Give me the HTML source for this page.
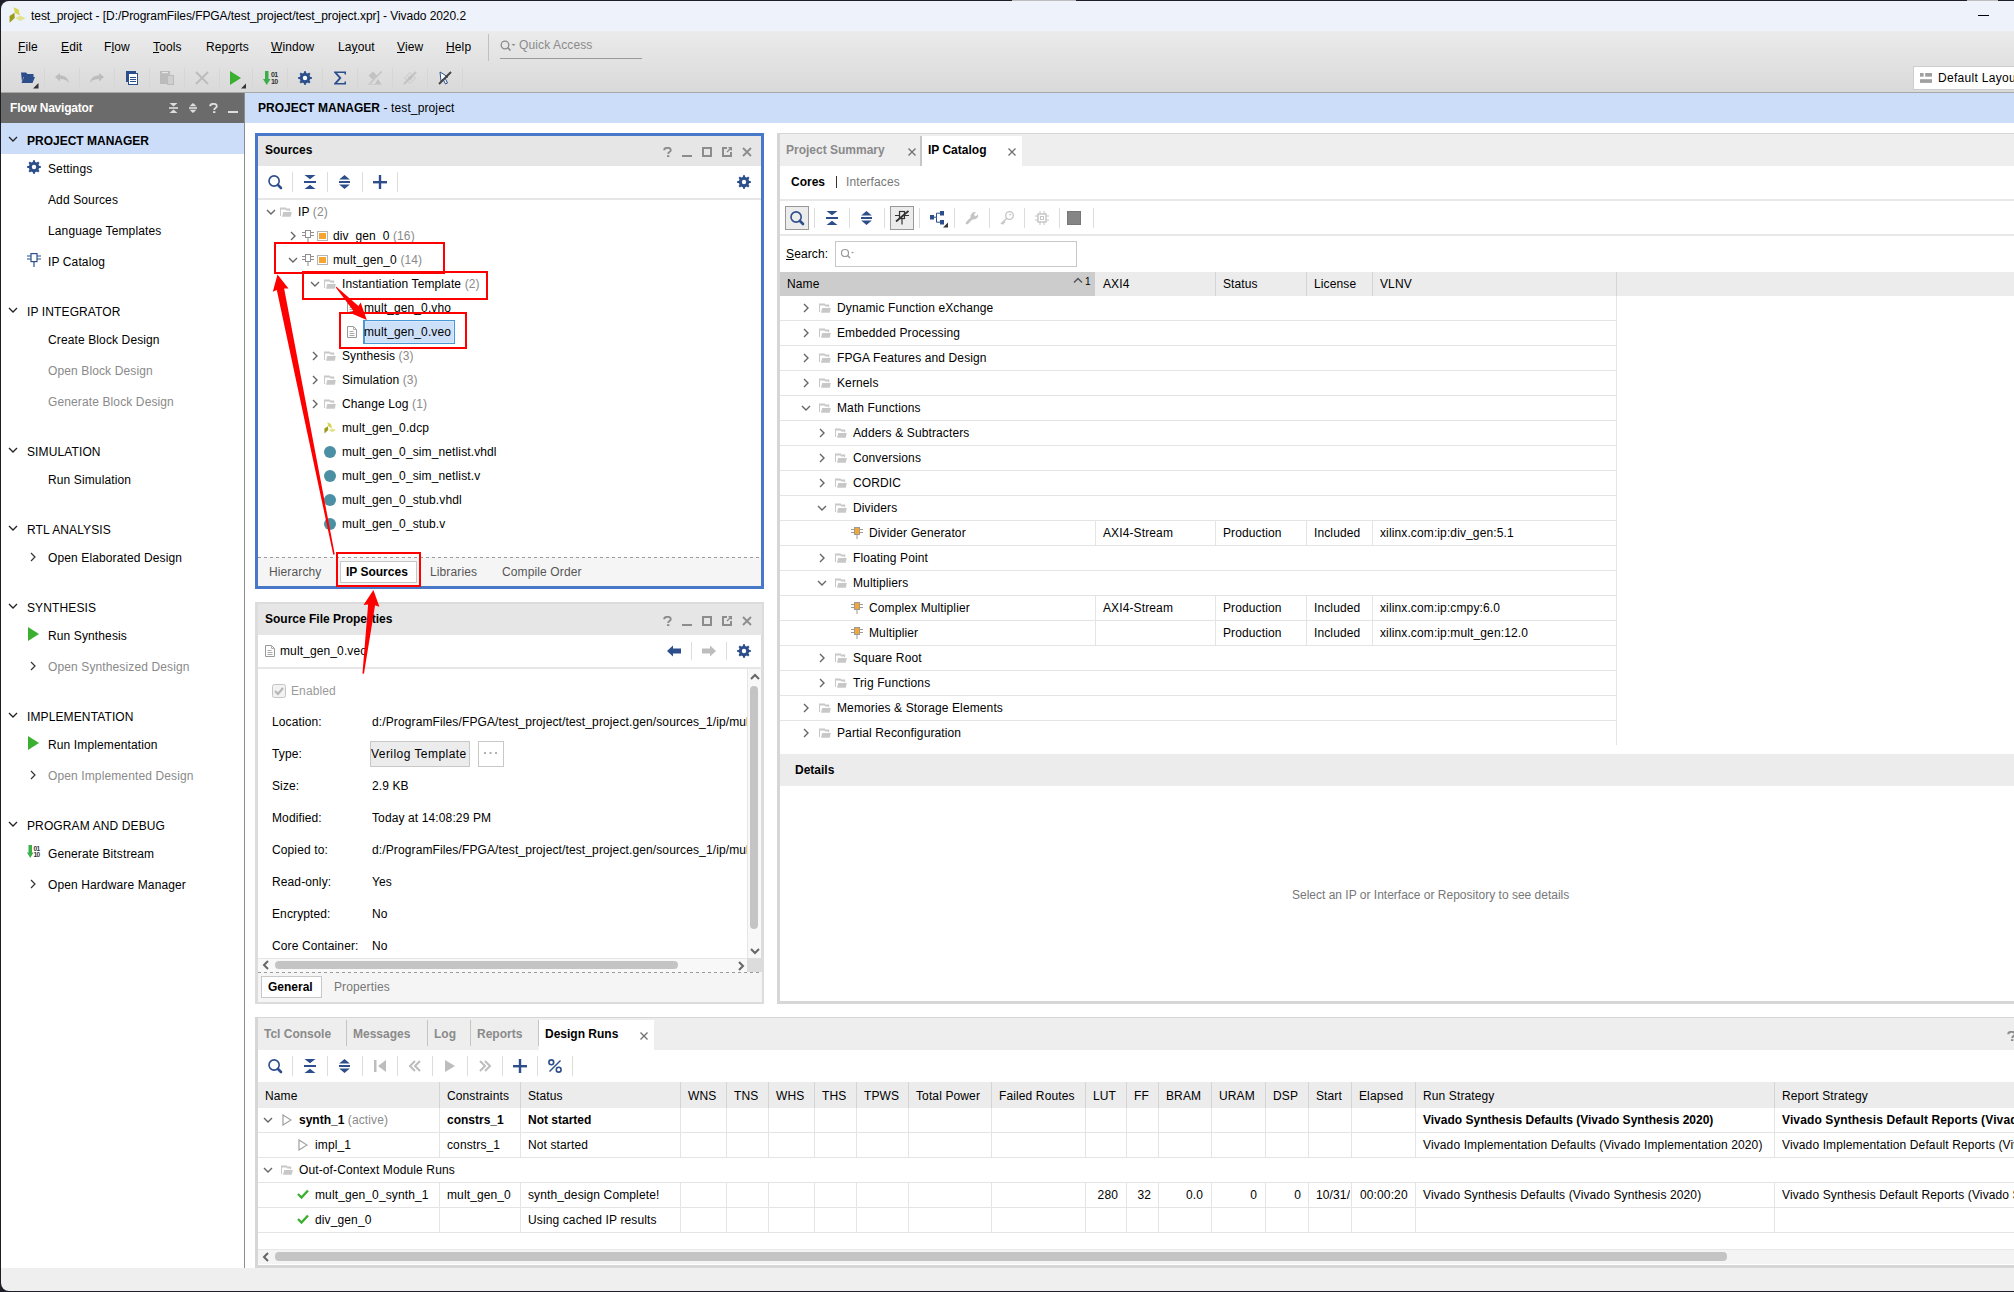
<!DOCTYPE html><html><head><meta charset="utf-8"><style>
html,body{margin:0;padding:0}
body{width:2014px;height:1292px;position:relative;overflow:hidden;background:#fff;font-family:"Liberation Sans",sans-serif;font-size:12px;color:#000}
.a{position:absolute}
.t{position:absolute;white-space:nowrap;line-height:14px;font-size:12px;font-family:"Liberation Sans",sans-serif;letter-spacing:0.12px}
b{letter-spacing:0}
.g{color:#8a8a8a}
.b{font-weight:700}
</style></head><body>
<div class="a" style="left:0px;top:0px;width:2014px;height:1292px;background:#1e1e28"></div>
<div class="a" style="left:1012px;top:0px;width:64px;height:1px;background:#bdbdbd"></div>
<div class="a" style="left:1967px;top:0px;width:31px;height:1px;background:#bdbdbd"></div>
<div class="a" style="left:1px;top:1px;width:2013px;height:30px;background:#eef2fa;border-top-left-radius:8px"></div>
<svg class="a" style="left:9px;top:7px" width="16.5" height="16.5" viewBox="0 0 16 16"><path d="M4.5 0.3 L9.3 2.5 L10.6 8.2 L5.8 5.9 Z" fill="#d5d64c"/><path d="M0.5 8.8 L5.3 5.6 L5.6 10.6 L0.6 15.3 Z" fill="#9b9b1c"/><path d="M6.2 10.5 L11.2 8.6 L16 10.8 L10.8 13.6 Z" fill="#e2e38c"/></svg>
<div class="t" style="left:31px;top:9px;letter-spacing:-0.06px">test_project - [D:/ProgramFiles/FPGA/test_project/test_project.xpr] - Vivado 2020.2</div>
<div class="a" style="left:1978px;top:15px;width:11px;height:1px;background:#000"></div>
<div class="a" style="left:1px;top:31px;width:2013px;height:61px;background:linear-gradient(#ebebeb,#d9d9d9)"></div>
<div class="a" style="left:1px;top:92px;width:2013px;height:1px;background:#a8a8a8"></div>
<div class="t" style="left:18px;top:40px;"><u>F</u>ile</div>
<div class="t" style="left:61px;top:40px;"><u>E</u>dit</div>
<div class="t" style="left:104px;top:40px;">F<u>l</u>ow</div>
<div class="t" style="left:153px;top:40px;"><u>T</u>ools</div>
<div class="t" style="left:206px;top:40px;">Rep<u>o</u>rts</div>
<div class="t" style="left:271px;top:40px;"><u>W</u>indow</div>
<div class="t" style="left:338px;top:40px;">La<u>y</u>out</div>
<div class="t" style="left:397px;top:40px;"><u>V</u>iew</div>
<div class="t" style="left:446px;top:40px;"><u>H</u>elp</div>
<div class="a" style="left:488px;top:34px;width:1px;height:27px;background:#c0c0c0"></div>
<svg class="a" style="left:500px;top:40px" width="16" height="12" viewBox="0 0 16 12"><circle cx="5" cy="5" r="3.8" fill="none" stroke="#8a8a8a" stroke-width="1.3"/><path d="M7.8 7.8 L10.5 10.5" stroke="#8a8a8a" stroke-width="1.6"/><path d="M11.5 4 h4 l-2 2 z" fill="#8a8a8a"/></svg>
<div class="t" style="left:519px;top:38px;color:#8a8a8a">Quick Access</div>
<div class="a" style="left:500px;top:58px;width:142px;height:1px;background:#9a9a9a"></div>
<div class="a" style="left:44px;top:68px;width:1px;height:20px;background:#d6d6d6"></div>
<div class="a" style="left:79px;top:68px;width:1px;height:20px;background:#d6d6d6"></div>
<div class="a" style="left:114px;top:68px;width:1px;height:20px;background:#d6d6d6"></div>
<div class="a" style="left:149px;top:68px;width:1px;height:20px;background:#d6d6d6"></div>
<div class="a" style="left:184px;top:68px;width:1px;height:20px;background:#d6d6d6"></div>
<div class="a" style="left:219px;top:68px;width:1px;height:20px;background:#d6d6d6"></div>
<div class="a" style="left:252px;top:68px;width:1px;height:20px;background:#d6d6d6"></div>
<div class="a" style="left:287px;top:68px;width:1px;height:20px;background:#d6d6d6"></div>
<div class="a" style="left:322px;top:68px;width:1px;height:20px;background:#d6d6d6"></div>
<div class="a" style="left:357px;top:68px;width:1px;height:20px;background:#d6d6d6"></div>
<div class="a" style="left:392px;top:68px;width:1px;height:20px;background:#d6d6d6"></div>
<div class="a" style="left:427px;top:68px;width:1px;height:20px;background:#d6d6d6"></div>
<div class="a" style="left:462px;top:68px;width:1px;height:20px;background:#d6d6d6"></div>
<svg class="a" style="left:21px;top:71px" width="18" height="18" viewBox="0 0 18 18"><path d="M0 1.5 h5 l1.5 1.5 h6 v3 h-10 l-1.5 5 z" fill="#2c4f8c"/><path d="M3 6 h11 l-2.5 6 h-11 z" fill="#2c4f8c"/><path d="M12 17.5 L17.5 17.5 L17.5 12 Z" fill="#333"/></svg>
<svg class="a" style="left:55px;top:73px" width="14" height="10" viewBox="0 0 14 10"><path d="M0 4 L5 0 V2.5 C10 2.5 13.5 5 14 10 C12 7 9 6 5 6 V8.5 Z" fill="#bdbdbd"/></svg>
<svg class="a" style="left:90px;top:73px" width="14" height="10" viewBox="0 0 14 10"><path d="M14 4 L9 0 V2.5 C4 2.5 0.5 5 0 10 C2 7 5 6 9 6 V8.5 Z" fill="#bdbdbd"/></svg>
<svg class="a" style="left:126px;top:71px" width="12" height="14" viewBox="0 0 12 14"><rect x="0" y="0" width="10" height="11" fill="#2c4f8c"/><rect x="2.5" y="2.5" width="9" height="11" fill="#fff" stroke="#2c4f8c" stroke-width="1"/><path d="M4 6.5h6M4 8.5h6M4 10.5h6" stroke="#2c4f8c" stroke-width="1"/></svg>
<svg class="a" style="left:160px;top:71px" width="14" height="14" viewBox="0 0 14 14"><rect x="0" y="0" width="10" height="13" fill="#bbb"/><rect x="2" y="1" width="6" height="1.2" fill="#e5e5e5"/><rect x="7.5" y="4.5" width="6" height="9" fill="#cfcfcf" stroke="#bbb"/></svg>
<svg class="a" style="left:195px;top:71px" width="14" height="14" viewBox="0 0 14 14"><path d="M1 1 L13 13 M13 1 L1 13" stroke="#bdbdbd" stroke-width="2"/></svg>
<svg class="a" style="left:229px;top:71px" width="18" height="18" viewBox="0 0 18 18"><path d="M1 0 L12 7 L1 14 Z" fill="#3bb030"/><path d="M12 17.5 L17 17.5 L17 12.5 Z" fill="#333"/></svg>
<svg class="a" style="left:263px;top:71px" width="16" height="14" viewBox="0 0 16 14"><rect x="2" y="0" width="3.5" height="9" fill="#3bb04a"/><path d="M0 8 h7.5 l-3.75 6 z" fill="#3bb04a"/><text x="8" y="6" font-size="7" font-weight="700" font-family="Liberation Sans" fill="#333" letter-spacing="-0.6">01</text><text x="8" y="12.8" font-size="7" font-weight="700" font-family="Liberation Sans" fill="#333" letter-spacing="-0.6">10</text></svg>
<svg class="a" style="left:298px;top:71px" width="14" height="14" viewBox="0 0 14 14"><path d="M6.0 0.2 H8.0 L8.6 7.0 H5.4 Z" fill="#2c4f8c" transform="rotate(0 7.0 7.0)"/><path d="M6.0 0.2 H8.0 L8.6 7.0 H5.4 Z" fill="#2c4f8c" transform="rotate(45 7.0 7.0)"/><path d="M6.0 0.2 H8.0 L8.6 7.0 H5.4 Z" fill="#2c4f8c" transform="rotate(90 7.0 7.0)"/><path d="M6.0 0.2 H8.0 L8.6 7.0 H5.4 Z" fill="#2c4f8c" transform="rotate(135 7.0 7.0)"/><path d="M6.0 0.2 H8.0 L8.6 7.0 H5.4 Z" fill="#2c4f8c" transform="rotate(180 7.0 7.0)"/><path d="M6.0 0.2 H8.0 L8.6 7.0 H5.4 Z" fill="#2c4f8c" transform="rotate(225 7.0 7.0)"/><path d="M6.0 0.2 H8.0 L8.6 7.0 H5.4 Z" fill="#2c4f8c" transform="rotate(270 7.0 7.0)"/><path d="M6.0 0.2 H8.0 L8.6 7.0 H5.4 Z" fill="#2c4f8c" transform="rotate(315 7.0 7.0)"/><circle cx="7.0" cy="7.0" r="5.18" fill="#2c4f8c"/><circle cx="7.0" cy="7.0" r="2.17" fill="#fff"/></svg>
<svg class="a" style="left:333px;top:71px" width="14" height="14" viewBox="0 0 14 14"><path d="M1 0.5 H13 V3.5 H11.5 V2 H4 L8.5 7 L4 12 H11.5 V10.5 H13 V13.5 H1 V12.5 L6 7 L1 1.5 Z" fill="#2c4f8c"/></svg>
<svg class="a" style="left:368px;top:71px" width="14" height="14" viewBox="0 0 14 14"><path d="M0.5 4.5 L5 0.5 L9.5 5 L5 9 Z" fill="#c2c2c2"/><path d="M13.5 0.5 L1 13.5" stroke="#c6c6c6" stroke-width="1.6"/><path d="M6.5 13.5 h7 l-3.5 -5.5 z" fill="#c2c2c2"/><path d="M0 13.5 h14" stroke="#cdcdcd"/></svg>
<svg class="a" style="left:403px;top:71px" width="14" height="14" viewBox="0 0 14 14"><path d="M7 1.5 L12.5 7 L7 12.5 L1.5 7 Z" fill="none" stroke="#c9c9c9"/><path d="M13 1 L1 13" stroke="#c2c2c2" stroke-width="2"/><ellipse cx="7" cy="7" rx="1.8" ry="3" transform="rotate(45 7 7)" fill="#c2c2c2"/></svg>
<svg class="a" style="left:438px;top:71px" width="14" height="14" viewBox="0 0 14 14"><path d="M2 1 L10 6 L7 7 L9.5 12 L7.5 13 L5 8 L3 10 Z" fill="#fff" stroke="#2c4f8c" stroke-width="1"/><path d="M13 1 L1 13" stroke="#444" stroke-width="2"/></svg>
<div class="a" style="left:1913px;top:66px;width:110px;height:24px;background:#fff;border:1px solid #cdcdcd;box-sizing:border-box"></div>
<svg class="a" style="left:1920px;top:73px" width="12" height="10" viewBox="0 0 12 10"><rect x="0" y="0" width="3.6" height="3.7" fill="#a0a0a0"/><rect x="5.2" y="0" width="6.8" height="3.7" fill="#a0a0a0"/><rect x="0" y="6.2" width="12" height="3.7" fill="#a0a0a0"/></svg>
<div class="t" style="left:1938px;top:71px;letter-spacing:0.3px">Default Layout</div>
<div class="a" style="left:1px;top:93px;width:243px;height:1176px;background:#fff"></div>
<div class="a" style="left:1px;top:93px;width:243px;height:30px;background:#6b6b6b"></div>
<div class="t" style="left:10px;top:101px;color:#fff;font-weight:700;letter-spacing:-0.2px">Flow Navigator</div>
<svg class="a" style="left:169px;top:103px" width="9" height="10" viewBox="0 0 9 10"><path d="M0.5 0 h8 l-4 3.5 z M0.5 10 h8 l-4 -3.5 z" fill="#dedede"/><rect x="0" y="4.2" width="9" height="1.6" fill="#dedede"/></svg>
<svg class="a" style="left:189px;top:103px" width="8" height="10" viewBox="0 0 8 10"><path d="M0.5 3.2 h7 l-3.5 -3.2 z M0.5 6.8 h7 l-3.5 3.2 z" fill="#dedede"/><rect x="0" y="4.2" width="8" height="1.6" fill="#dedede"/></svg>
<svg class="a" style="left:208.5px;top:103px" width="9" height="10" viewBox="0 0 9 10"><path d="M1.2 3.3 C1.2 1.4 2.6 0.8 4.5 0.8 C6.5 0.8 7.8 1.8 7.8 3.2 C7.8 5 5.2 5.2 5.2 6.9" fill="none" stroke="#dedede" stroke-width="1.9"/><rect x="4" y="8.2" width="2.4" height="1.8" fill="#dedede"/></svg>
<div class="a" style="left:228px;top:111px;width:10px;height:2px;background:#dedede"></div>
<div class="a" style="left:244px;top:93px;width:1px;height:1176px;background:#8c8c8c"></div>
<div class="a" style="left:1px;top:123px;width:243px;height:31px;background:#cbddf9"></div>
<svg class="a" style="left:7.5px;top:136px" width="10" height="6" viewBox="0 0 10 6"><path d="M1 1 L5 5 L9 1" fill="none" stroke="#222" stroke-width="1.3"/></svg>
<div class="t" style="left:27px;top:134px;font-weight:700;letter-spacing:0">PROJECT MANAGER</div>
<svg class="a" style="left:27px;top:160px" width="14" height="14" viewBox="0 0 14 14"><path d="M6.0 0.2 H8.0 L8.6 7.0 H5.4 Z" fill="#2c4f8c" transform="rotate(0 7.0 7.0)"/><path d="M6.0 0.2 H8.0 L8.6 7.0 H5.4 Z" fill="#2c4f8c" transform="rotate(45 7.0 7.0)"/><path d="M6.0 0.2 H8.0 L8.6 7.0 H5.4 Z" fill="#2c4f8c" transform="rotate(90 7.0 7.0)"/><path d="M6.0 0.2 H8.0 L8.6 7.0 H5.4 Z" fill="#2c4f8c" transform="rotate(135 7.0 7.0)"/><path d="M6.0 0.2 H8.0 L8.6 7.0 H5.4 Z" fill="#2c4f8c" transform="rotate(180 7.0 7.0)"/><path d="M6.0 0.2 H8.0 L8.6 7.0 H5.4 Z" fill="#2c4f8c" transform="rotate(225 7.0 7.0)"/><path d="M6.0 0.2 H8.0 L8.6 7.0 H5.4 Z" fill="#2c4f8c" transform="rotate(270 7.0 7.0)"/><path d="M6.0 0.2 H8.0 L8.6 7.0 H5.4 Z" fill="#2c4f8c" transform="rotate(315 7.0 7.0)"/><circle cx="7.0" cy="7.0" r="5.18" fill="#2c4f8c"/><circle cx="7.0" cy="7.0" r="2.17" fill="#fff"/></svg>
<div class="t" style="left:48px;top:162px;">Settings</div>
<div class="t" style="left:48px;top:193px;">Add Sources</div>
<div class="t" style="left:48px;top:224px;">Language Templates</div>
<svg class="a" style="left:27px;top:253px" width="14" height="14" viewBox="0 0 14 14"><rect x="4" y="0.6" width="6" height="8" fill="none" stroke="#2c4f8c" stroke-width="1.2"/><path d="M0 3h4M0 6h4M10 3h4M10 6h4M7 8.6v5.4" stroke="#2c4f8c" stroke-width="1.2"/></svg>
<div class="t" style="left:48px;top:255px;">IP Catalog</div>
<svg class="a" style="left:7.5px;top:307px" width="10" height="6" viewBox="0 0 10 6"><path d="M1 1 L5 5 L9 1" fill="none" stroke="#222" stroke-width="1.3"/></svg>
<div class="t" style="left:27px;top:305px;">IP INTEGRATOR</div>
<div class="t" style="left:48px;top:333px;">Create Block Design</div>
<div class="t" style="left:48px;top:364px;color:#8a8a8a">Open Block Design</div>
<div class="t" style="left:48px;top:395px;color:#8a8a8a">Generate Block Design</div>
<svg class="a" style="left:7.5px;top:447px" width="10" height="6" viewBox="0 0 10 6"><path d="M1 1 L5 5 L9 1" fill="none" stroke="#222" stroke-width="1.3"/></svg>
<div class="t" style="left:27px;top:445px;">SIMULATION</div>
<div class="t" style="left:48px;top:473px;">Run Simulation</div>
<svg class="a" style="left:7.5px;top:525px" width="10" height="6" viewBox="0 0 10 6"><path d="M1 1 L5 5 L9 1" fill="none" stroke="#222" stroke-width="1.3"/></svg>
<div class="t" style="left:27px;top:523px;">RTL ANALYSIS</div>
<svg class="a" style="left:30px;top:552px" width="6" height="10" viewBox="0 0 6 10"><path d="M1 1 L5 5 L1 9" fill="none" stroke="#333" stroke-width="1.2"/></svg>
<div class="t" style="left:48px;top:551px;">Open Elaborated Design</div>
<svg class="a" style="left:7.5px;top:603px" width="10" height="6" viewBox="0 0 10 6"><path d="M1 1 L5 5 L9 1" fill="none" stroke="#222" stroke-width="1.3"/></svg>
<div class="t" style="left:27px;top:601px;">SYNTHESIS</div>
<svg class="a" style="left:28px;top:627px" width="12" height="14" viewBox="0 0 12 14"><path d="M0 0 L11 7 L0 14 Z" fill="#3bb030"/></svg>
<div class="t" style="left:48px;top:629px;">Run Synthesis</div>
<svg class="a" style="left:30px;top:661px" width="6" height="10" viewBox="0 0 6 10"><path d="M1 1 L5 5 L1 9" fill="none" stroke="#333" stroke-width="1.2"/></svg>
<div class="t" style="left:48px;top:660px;color:#8a8a8a">Open Synthesized Design</div>
<svg class="a" style="left:7.5px;top:712px" width="10" height="6" viewBox="0 0 10 6"><path d="M1 1 L5 5 L9 1" fill="none" stroke="#222" stroke-width="1.3"/></svg>
<div class="t" style="left:27px;top:710px;">IMPLEMENTATION</div>
<svg class="a" style="left:28px;top:736px" width="12" height="14" viewBox="0 0 12 14"><path d="M0 0 L11 7 L0 14 Z" fill="#3bb030"/></svg>
<div class="t" style="left:48px;top:738px;">Run Implementation</div>
<svg class="a" style="left:30px;top:770px" width="6" height="10" viewBox="0 0 6 10"><path d="M1 1 L5 5 L1 9" fill="none" stroke="#333" stroke-width="1.2"/></svg>
<div class="t" style="left:48px;top:769px;color:#8a8a8a">Open Implemented Design</div>
<svg class="a" style="left:7.5px;top:821px" width="10" height="6" viewBox="0 0 10 6"><path d="M1 1 L5 5 L9 1" fill="none" stroke="#222" stroke-width="1.3"/></svg>
<div class="t" style="left:27px;top:819px;">PROGRAM AND DEBUG</div>
<svg class="a" style="left:27px;top:845px" width="15" height="14" viewBox="0 0 15 14"><rect x="1.5" y="0" width="3.5" height="8" fill="#3bb04a"/><path d="M0 7.5 h6.5 l-3.25 5.5 z" fill="#3bb04a"/><text x="6.6" y="5.6" font-size="6.5" font-weight="700" font-family="Liberation Sans" fill="#333" letter-spacing="-0.6">01</text><text x="6.6" y="11.6" font-size="6.5" font-weight="700" font-family="Liberation Sans" fill="#333" letter-spacing="-0.6">10</text></svg>
<div class="t" style="left:48px;top:847px;">Generate Bitstream</div>
<svg class="a" style="left:30px;top:879px" width="6" height="10" viewBox="0 0 6 10"><path d="M1 1 L5 5 L1 9" fill="none" stroke="#333" stroke-width="1.2"/></svg>
<div class="t" style="left:48px;top:878px;">Open Hardware Manager</div>
<div class="a" style="left:245px;top:93px;width:1769px;height:1175px;background:#fff"></div>
<div class="a" style="left:245px;top:93px;width:1769px;height:30px;background:#cbddf9"></div>
<div class="t" style="left:258px;top:101px;"><b>PROJECT MANAGER</b> - test_project</div>
<div class="a" style="left:255px;top:133px;width:509px;height:456px;background:#fff;border:3px solid #4a78c8;box-sizing:border-box"></div>
<div class="a" style="left:258px;top:136px;width:503px;height:30px;background:#e6e6e6"></div>
<div class="t" style="left:265px;top:143px;font-weight:700;letter-spacing:0">Sources</div>
<svg class="a" style="left:663px;top:147px" width="9" height="10" viewBox="0 0 9 10"><path d="M1.2 3.3 C1.2 1.4 2.6 0.8 4.5 0.8 C6.5 0.8 7.8 1.8 7.8 3.2 C7.8 5 5.2 5.2 5.2 6.9" fill="none" stroke="#8c8c8c" stroke-width="1.9"/><rect x="4" y="8.2" width="2.4" height="1.8" fill="#8c8c8c"/></svg>
<div class="a" style="left:682px;top:155px;width:10px;height:2px;background:#8c8c8c"></div>
<svg class="a" style="left:702px;top:147px" width="10" height="10" viewBox="0 0 10 10"><rect x="1" y="1" width="8" height="8" fill="none" stroke="#8c8c8c" stroke-width="2"/></svg>
<svg class="a" style="left:722px;top:147px" width="10" height="10" viewBox="0 0 10 10"><path d="M5 1 H1 V9 H9 V5" fill="none" stroke="#8c8c8c" stroke-width="2"/><path d="M5 5 L9.5 0.5 M6.5 0.5 H9.5 V3.5" fill="none" stroke="#8c8c8c" stroke-width="1.4"/></svg>
<svg class="a" style="left:742px;top:147px" width="10" height="10" viewBox="0 0 10 10"><path d="M1 1 L9 9 M9 1 L1 9" stroke="#8c8c8c" stroke-width="1.8"/></svg>
<svg class="a" style="left:268px;top:175px" width="15" height="15" viewBox="0 0 15 15"><circle cx="6.1" cy="6" r="5.1" fill="none" stroke="#2d4e8b" stroke-width="1.6"/><path d="M10 10 L13 13" stroke="#2d4e8b" stroke-width="2.6" stroke-linecap="round"/></svg>
<svg class="a" style="left:303px;top:175px" width="14" height="15" viewBox="0 0 14 15"><path d="M1.5 0 h11 l-5.5 4.3 z M1.5 14 h11 l-5.5 -4.3 z" fill="#2d4e8b"/><rect x="1" y="6" width="12" height="2" fill="#2d4e8b"/></svg>
<svg class="a" style="left:338px;top:175px" width="14" height="15" viewBox="0 0 14 15"><path d="M1.2 4.6 h10.6 l-5.3 -4.6 z M1.2 9.4 h10.6 l-5.3 4.6 z" fill="#2d4e8b"/><rect x="1" y="6" width="11" height="2" fill="#2d4e8b"/></svg>
<svg class="a" style="left:373px;top:175px" width="14" height="14" viewBox="0 0 14 14"><rect x="0" y="6" width="14" height="2.4" fill="#2d4e8b"/><rect x="5.8" y="0" width="2.4" height="14" fill="#2d4e8b"/></svg>
<div class="a" style="left:292px;top:172px;width:1px;height:20px;background:#dcdcdc"></div>
<div class="a" style="left:327px;top:172px;width:1px;height:20px;background:#dcdcdc"></div>
<div class="a" style="left:362px;top:172px;width:1px;height:20px;background:#dcdcdc"></div>
<div class="a" style="left:397px;top:172px;width:1px;height:20px;background:#dcdcdc"></div>
<svg class="a" style="left:737px;top:175px" width="14" height="14" viewBox="0 0 14 14"><path d="M6.0 0.2 H8.0 L8.6 7.0 H5.4 Z" fill="#2c4f8c" transform="rotate(0 7.0 7.0)"/><path d="M6.0 0.2 H8.0 L8.6 7.0 H5.4 Z" fill="#2c4f8c" transform="rotate(45 7.0 7.0)"/><path d="M6.0 0.2 H8.0 L8.6 7.0 H5.4 Z" fill="#2c4f8c" transform="rotate(90 7.0 7.0)"/><path d="M6.0 0.2 H8.0 L8.6 7.0 H5.4 Z" fill="#2c4f8c" transform="rotate(135 7.0 7.0)"/><path d="M6.0 0.2 H8.0 L8.6 7.0 H5.4 Z" fill="#2c4f8c" transform="rotate(180 7.0 7.0)"/><path d="M6.0 0.2 H8.0 L8.6 7.0 H5.4 Z" fill="#2c4f8c" transform="rotate(225 7.0 7.0)"/><path d="M6.0 0.2 H8.0 L8.6 7.0 H5.4 Z" fill="#2c4f8c" transform="rotate(270 7.0 7.0)"/><path d="M6.0 0.2 H8.0 L8.6 7.0 H5.4 Z" fill="#2c4f8c" transform="rotate(315 7.0 7.0)"/><circle cx="7.0" cy="7.0" r="5.18" fill="#2c4f8c"/><circle cx="7.0" cy="7.0" r="2.17" fill="#fff"/></svg>
<div class="a" style="left:258px;top:198px;width:503px;height:2px;background:#e6e6e6"></div>
<svg class="a" style="left:266px;top:209px" width="10" height="6" viewBox="0 0 10 6"><path d="M1 1 L5 5 L9 1" fill="none" stroke="#666" stroke-width="1.4"/></svg>
<svg class="a" style="left:280px;top:207px" width="12" height="10" viewBox="0 0 12 10"><path d="M0 0.4 H5.8 L6.4 1.5 H10.2 V4.2 H9.2 V3.5 H6 L5.5 2.5 H1 V9 H0 Z" fill="#c8c8c8"/><path d="M3.2 5 H11.8 L10.8 9.7 H2 Z" fill="#c8c8c8"/></svg>
<div class="t" style="left:298px;top:205px;">IP <span class="g">(2)</span></div>
<svg class="a" style="left:290px;top:231px" width="6" height="10" viewBox="0 0 6 10"><path d="M1 1 L5 5 L1 9" fill="none" stroke="#666" stroke-width="1.4"/></svg>
<svg class="a" style="left:302px;top:230px" width="12" height="12" viewBox="0 0 12 12"><rect x="3.5" y="0.5" width="5" height="7" fill="none" stroke="#8f8f8f"/><path d="M0 2.5h3.5M0 5.5h3.5M8.5 2.5h3.5M8.5 5.5h3.5M6 7.5v4.5" stroke="#8f8f8f"/></svg>
<svg class="a" style="left:317px;top:231px" width="11" height="10" viewBox="0 0 11 10"><rect x="0.5" y="0.5" width="10" height="9" fill="#fff" stroke="#b5b5b5"/><rect x="2" y="2" width="7" height="6" fill="#f7a531"/></svg>
<div class="t" style="left:333px;top:229px;">div_gen_0 <span class="g">(16)</span></div>
<svg class="a" style="left:288px;top:257px" width="10" height="6" viewBox="0 0 10 6"><path d="M1 1 L5 5 L9 1" fill="none" stroke="#666" stroke-width="1.4"/></svg>
<svg class="a" style="left:302px;top:254px" width="12" height="12" viewBox="0 0 12 12"><rect x="3.5" y="0.5" width="5" height="7" fill="none" stroke="#8f8f8f"/><path d="M0 2.5h3.5M0 5.5h3.5M8.5 2.5h3.5M8.5 5.5h3.5M6 7.5v4.5" stroke="#8f8f8f"/></svg>
<svg class="a" style="left:317px;top:255px" width="11" height="10" viewBox="0 0 11 10"><rect x="0.5" y="0.5" width="10" height="9" fill="#fff" stroke="#b5b5b5"/><rect x="2" y="2" width="7" height="6" fill="#f7a531"/></svg>
<div class="t" style="left:333px;top:253px;">mult_gen_0 <span class="g">(14)</span></div>
<svg class="a" style="left:310px;top:281px" width="10" height="6" viewBox="0 0 10 6"><path d="M1 1 L5 5 L9 1" fill="none" stroke="#666" stroke-width="1.4"/></svg>
<svg class="a" style="left:324px;top:279px" width="12" height="10" viewBox="0 0 12 10"><path d="M0 0.4 H5.8 L6.4 1.5 H10.2 V4.2 H9.2 V3.5 H6 L5.5 2.5 H1 V9 H0 Z" fill="#c8c8c8"/><path d="M3.2 5 H11.8 L10.8 9.7 H2 Z" fill="#c8c8c8"/></svg>
<div class="t" style="left:342px;top:277px;">Instantiation Template <span class="g">(2)</span></div>
<svg class="a" style="left:347px;top:302px" width="10" height="12" viewBox="0 0 10 12"><path d="M0.5 0.5 h6 l3 3 v8 h-9 z" fill="#fff" stroke="#9a9a9a"/><path d="M6.5 0.5 v3 h3" fill="none" stroke="#b0b0b0"/><path d="M2.5 5.5h4M2.5 7.5h5M2.5 9.5h5" stroke="#a8a8a8"/></svg>
<div class="t" style="left:364px;top:301px;">mult_gen_0.vho</div>
<div class="a" style="left:363px;top:320px;width:92px;height:24px;background:#cde0fa;border:1px solid #4898d8;border-left-width:2px;box-shadow:inset 0 0 0 1px #dbe8fb;box-sizing:border-box"></div>
<svg class="a" style="left:347px;top:326px" width="10" height="12" viewBox="0 0 10 12"><path d="M0.5 0.5 h6 l3 3 v8 h-9 z" fill="#fff" stroke="#9a9a9a"/><path d="M6.5 0.5 v3 h3" fill="none" stroke="#b0b0b0"/><path d="M2.5 5.5h4M2.5 7.5h5M2.5 9.5h5" stroke="#a8a8a8"/></svg>
<div class="t" style="left:364px;top:325px;">mult_gen_0.veo</div>
<svg class="a" style="left:312px;top:351px" width="6" height="10" viewBox="0 0 6 10"><path d="M1 1 L5 5 L1 9" fill="none" stroke="#666" stroke-width="1.4"/></svg>
<svg class="a" style="left:324px;top:351px" width="12" height="10" viewBox="0 0 12 10"><path d="M0 0.4 H5.8 L6.4 1.5 H10.2 V4.2 H9.2 V3.5 H6 L5.5 2.5 H1 V9 H0 Z" fill="#c8c8c8"/><path d="M3.2 5 H11.8 L10.8 9.7 H2 Z" fill="#c8c8c8"/></svg>
<div class="t" style="left:342px;top:349px;">Synthesis <span class="g">(3)</span></div>
<svg class="a" style="left:312px;top:375px" width="6" height="10" viewBox="0 0 6 10"><path d="M1 1 L5 5 L1 9" fill="none" stroke="#666" stroke-width="1.4"/></svg>
<svg class="a" style="left:324px;top:375px" width="12" height="10" viewBox="0 0 12 10"><path d="M0 0.4 H5.8 L6.4 1.5 H10.2 V4.2 H9.2 V3.5 H6 L5.5 2.5 H1 V9 H0 Z" fill="#c8c8c8"/><path d="M3.2 5 H11.8 L10.8 9.7 H2 Z" fill="#c8c8c8"/></svg>
<div class="t" style="left:342px;top:373px;">Simulation <span class="g">(3)</span></div>
<svg class="a" style="left:312px;top:399px" width="6" height="10" viewBox="0 0 6 10"><path d="M1 1 L5 5 L1 9" fill="none" stroke="#666" stroke-width="1.4"/></svg>
<svg class="a" style="left:324px;top:399px" width="12" height="10" viewBox="0 0 12 10"><path d="M0 0.4 H5.8 L6.4 1.5 H10.2 V4.2 H9.2 V3.5 H6 L5.5 2.5 H1 V9 H0 Z" fill="#c8c8c8"/><path d="M3.2 5 H11.8 L10.8 9.7 H2 Z" fill="#c8c8c8"/></svg>
<div class="t" style="left:342px;top:397px;">Change Log <span class="g">(1)</span></div>
<svg class="a" style="left:324px;top:422px" width="12" height="12" viewBox="0 0 16 16"><path d="M4.5 0.3 L9.3 2.5 L10.6 8.2 L5.8 5.9 Z" fill="#d5d64c"/><path d="M0.5 8.8 L5.3 5.6 L5.6 10.6 L0.6 15.3 Z" fill="#9b9b1c"/><path d="M6.2 10.5 L11.2 8.6 L16 10.8 L10.8 13.6 Z" fill="#e2e38c"/></svg>
<div class="t" style="left:342px;top:421px;">mult_gen_0.dcp</div>
<svg class="a" style="left:324px;top:446px" width="12" height="12" viewBox="0 0 12 12"><circle cx="6" cy="6" r="6" fill="#4a8fa3"/></svg>
<div class="t" style="left:342px;top:445px;">mult_gen_0_sim_netlist.vhdl</div>
<svg class="a" style="left:324px;top:470px" width="12" height="12" viewBox="0 0 12 12"><circle cx="6" cy="6" r="6" fill="#4a8fa3"/></svg>
<div class="t" style="left:342px;top:469px;">mult_gen_0_sim_netlist.v</div>
<svg class="a" style="left:324px;top:494px" width="12" height="12" viewBox="0 0 12 12"><circle cx="6" cy="6" r="6" fill="#4a8fa3"/></svg>
<div class="t" style="left:342px;top:493px;">mult_gen_0_stub.vhdl</div>
<svg class="a" style="left:324px;top:518px" width="12" height="12" viewBox="0 0 12 12"><circle cx="6" cy="6" r="6" fill="#4a8fa3"/></svg>
<div class="t" style="left:342px;top:517px;">mult_gen_0_stub.v</div>
<div class="a" style="left:258px;top:557px;width:503px;height:29px;background:#f5f5f5"></div>
<div class="a" style="left:258px;top:557px;width:503px;height:1px;background:repeating-linear-gradient(90deg,#9a9a9a 0 3px,transparent 3px 6px)"></div>
<div class="t" style="left:269px;top:565px;color:#555">Hierarchy</div>
<div class="a" style="left:340px;top:561px;width:77px;height:22px;background:#fff;border:1px solid #c8c8c8;box-sizing:border-box"></div>
<div class="t" style="left:346px;top:565px;font-weight:700;letter-spacing:0">IP Sources</div>
<div class="t" style="left:430px;top:565px;color:#555">Libraries</div>
<div class="t" style="left:502px;top:565px;color:#555">Compile Order</div>
<div class="a" style="left:255px;top:602px;width:509px;height:402px;background:#fff;border:2px solid #dcdcdc;border-left-width:3px;border-right-width:3px;box-sizing:border-box"></div>
<div class="a" style="left:258px;top:604px;width:504px;height:31px;background:#e6e6e6"></div>
<div class="t" style="left:265px;top:612px;font-weight:700;letter-spacing:0">Source File Properties</div>
<svg class="a" style="left:663px;top:616px" width="9" height="10" viewBox="0 0 9 10"><path d="M1.2 3.3 C1.2 1.4 2.6 0.8 4.5 0.8 C6.5 0.8 7.8 1.8 7.8 3.2 C7.8 5 5.2 5.2 5.2 6.9" fill="none" stroke="#8c8c8c" stroke-width="1.9"/><rect x="4" y="8.2" width="2.4" height="1.8" fill="#8c8c8c"/></svg>
<div class="a" style="left:682px;top:624px;width:10px;height:2px;background:#8c8c8c"></div>
<svg class="a" style="left:702px;top:616px" width="10" height="10" viewBox="0 0 10 10"><rect x="1" y="1" width="8" height="8" fill="none" stroke="#8c8c8c" stroke-width="2"/></svg>
<svg class="a" style="left:722px;top:616px" width="10" height="10" viewBox="0 0 10 10"><path d="M5 1 H1 V9 H9 V5" fill="none" stroke="#8c8c8c" stroke-width="2"/><path d="M5 5 L9.5 0.5 M6.5 0.5 H9.5 V3.5" fill="none" stroke="#8c8c8c" stroke-width="1.4"/></svg>
<svg class="a" style="left:742px;top:616px" width="10" height="10" viewBox="0 0 10 10"><path d="M1 1 L9 9 M9 1 L1 9" stroke="#8c8c8c" stroke-width="1.8"/></svg>
<svg class="a" style="left:265px;top:645px" width="10" height="12" viewBox="0 0 10 12"><path d="M0.5 0.5 h6 l3 3 v8 h-9 z" fill="#fff" stroke="#9a9a9a"/><path d="M6.5 0.5 v3 h3" fill="none" stroke="#b0b0b0"/><path d="M2.5 5.5h4M2.5 7.5h5M2.5 9.5h5" stroke="#a8a8a8"/></svg>
<div class="t" style="left:280px;top:644px;">mult_gen_0.veo</div>
<svg class="a" style="left:667px;top:645px" width="14" height="12" viewBox="0 0 14 12"><path d="M0 6 L6 0.5 V3.5 H14 V8.5 H6 V11.5 Z" fill="#2c4f8c"/></svg>
<svg class="a" style="left:702px;top:645px" width="14" height="12" viewBox="0 0 14 12"><path d="M14 6 L8 0.5 V3.5 H0 V8.5 H8 V11.5 Z" fill="#bdbdbd"/></svg>
<div class="a" style="left:691px;top:642px;width:1px;height:18px;background:#dcdcdc"></div>
<div class="a" style="left:726px;top:642px;width:1px;height:18px;background:#dcdcdc"></div>
<svg class="a" style="left:737px;top:644px" width="14" height="14" viewBox="0 0 14 14"><path d="M6.0 0.2 H8.0 L8.6 7.0 H5.4 Z" fill="#2c4f8c" transform="rotate(0 7.0 7.0)"/><path d="M6.0 0.2 H8.0 L8.6 7.0 H5.4 Z" fill="#2c4f8c" transform="rotate(45 7.0 7.0)"/><path d="M6.0 0.2 H8.0 L8.6 7.0 H5.4 Z" fill="#2c4f8c" transform="rotate(90 7.0 7.0)"/><path d="M6.0 0.2 H8.0 L8.6 7.0 H5.4 Z" fill="#2c4f8c" transform="rotate(135 7.0 7.0)"/><path d="M6.0 0.2 H8.0 L8.6 7.0 H5.4 Z" fill="#2c4f8c" transform="rotate(180 7.0 7.0)"/><path d="M6.0 0.2 H8.0 L8.6 7.0 H5.4 Z" fill="#2c4f8c" transform="rotate(225 7.0 7.0)"/><path d="M6.0 0.2 H8.0 L8.6 7.0 H5.4 Z" fill="#2c4f8c" transform="rotate(270 7.0 7.0)"/><path d="M6.0 0.2 H8.0 L8.6 7.0 H5.4 Z" fill="#2c4f8c" transform="rotate(315 7.0 7.0)"/><circle cx="7.0" cy="7.0" r="5.18" fill="#2c4f8c"/><circle cx="7.0" cy="7.0" r="2.17" fill="#fff"/></svg>
<div class="a" style="left:258px;top:667px;width:504px;height:2px;background:#e6e6e6"></div>
<svg class="a" style="left:272px;top:684px" width="14" height="14" viewBox="0 0 14 14"><rect x="0.5" y="0.5" width="13" height="13" rx="2" fill="#f2f2f2" stroke="#c4c4c4"/><path d="M3 7 L6 10 L11 4" fill="none" stroke="#b5b5b5" stroke-width="2"/></svg>
<div class="t" style="left:291px;top:684px;color:#9a9a9a">Enabled</div>
<div class="t" style="left:272px;top:715px;">Location:</div>
<div class="t" style="left:372px;top:715px;width:375px;overflow:hidden">d:/ProgramFiles/FPGA/test_project/test_project.gen/sources_1/ip/mult</div>
<div class="t" style="left:272px;top:747px;">Type:</div>
<div class="t" style="left:272px;top:779px;">Size:</div>
<div class="t" style="left:372px;top:779px;width:375px;overflow:hidden">2.9 KB</div>
<div class="t" style="left:272px;top:811px;">Modified:</div>
<div class="t" style="left:372px;top:811px;width:375px;overflow:hidden">Today at 14:08:29 PM</div>
<div class="t" style="left:272px;top:843px;">Copied to:</div>
<div class="t" style="left:372px;top:843px;width:375px;overflow:hidden">d:/ProgramFiles/FPGA/test_project/test_project.gen/sources_1/ip/mult</div>
<div class="t" style="left:272px;top:875px;">Read-only:</div>
<div class="t" style="left:372px;top:875px;width:375px;overflow:hidden">Yes</div>
<div class="t" style="left:272px;top:907px;">Encrypted:</div>
<div class="t" style="left:372px;top:907px;width:375px;overflow:hidden">No</div>
<div class="t" style="left:272px;top:939px;">Core Container:</div>
<div class="t" style="left:372px;top:939px;width:375px;overflow:hidden">No</div>
<div class="a" style="left:370px;top:741px;width:100px;height:26px;background:#ececec;border:1px solid #c8c8c8;box-sizing:border-box"></div>
<div class="t" style="left:371px;top:747px;width:98px;overflow:hidden;text-indent:0px;letter-spacing:0.45px">Verilog Template</div>
<div class="a" style="left:478px;top:741px;width:26px;height:26px;background:#fff;border:1px solid #c8c8c8;box-sizing:border-box"></div>
<svg class="a" style="left:484px;top:752px" width="14" height="3" viewBox="0 0 14 3"><rect x="0" y="0" width="2" height="2" fill="#b0b0b0"/><rect x="5.5" y="0" width="2" height="2" fill="#b0b0b0"/><rect x="11" y="0" width="2" height="2" fill="#b0b0b0"/></svg>
<div class="a" style="left:747px;top:669px;width:14px;height:289px;background:#f8f8f8;border-left:1px solid #e6e6e6;box-sizing:border-box"></div>
<div class="a" style="left:747px;top:958px;width:14px;height:14px;background:#dcdcdc"></div>
<svg class="a" style="left:750px;top:673px" width="10" height="7" viewBox="0 0 10 7"><path d="M1 6 L5 2 L9 6" fill="none" stroke="#666" stroke-width="2"/></svg>
<div class="a" style="left:750px;top:686px;width:8px;height:243px;background:#c4c4c4;border-radius:4px"></div>
<svg class="a" style="left:750px;top:948px" width="10" height="7" viewBox="0 0 10 7"><path d="M1 1 L5 5 L9 1" fill="none" stroke="#666" stroke-width="2"/></svg>
<div class="a" style="left:258px;top:958px;width:489px;height:14px;background:#f8f8f8;border-top:1px solid #e6e6e6;box-sizing:border-box"></div>
<svg class="a" style="left:262px;top:960px" width="7" height="10" viewBox="0 0 7 10"><path d="M6 1 L2 5 L6 9" fill="none" stroke="#666" stroke-width="2"/></svg>
<div class="a" style="left:275px;top:961px;width:403px;height:8px;background:#c4c4c4;border-radius:4px"></div>
<svg class="a" style="left:738px;top:961px" width="7" height="10" viewBox="0 0 7 10"><path d="M1 1 L5 5 L1 9" fill="none" stroke="#666" stroke-width="2"/></svg>
<div class="a" style="left:258px;top:972px;width:504px;height:30px;background:#f5f5f5"></div>
<div class="a" style="left:258px;top:972px;width:504px;height:1px;background:repeating-linear-gradient(90deg,#9a9a9a 0 3px,transparent 3px 6px)"></div>
<div class="a" style="left:261px;top:976px;width:61px;height:22px;background:#fff;border:1px solid #c8c8c8;box-sizing:border-box"></div>
<div class="t" style="left:268px;top:980px;font-weight:700;letter-spacing:0">General</div>
<div class="t" style="left:334px;top:980px;color:#777">Properties</div>
<div class="a" style="left:777px;top:133px;width:1237px;height:871px;background:#fff;border:3px solid #d6d6d6;border-right:none;border-top-width:1px;box-sizing:border-box"></div>
<div class="a" style="left:780px;top:134px;width:1234px;height:32px;background:#eeeeee"></div>
<div class="t" style="left:786px;top:143px;color:#8a8a8a;font-weight:700;letter-spacing:0">Project Summary</div>
<svg class="a" style="left:908px;top:148px" width="8" height="8" viewBox="0 0 8 8"><path d="M0.5 0.5 L7.5 7.5 M7.5 0.5 L0.5 7.5" stroke="#707070" stroke-width="1.3"/></svg>
<div class="a" style="left:920px;top:136px;width:2px;height:30px;background:#c6c6c6"></div>
<div class="a" style="left:922px;top:136px;width:100px;height:30px;background:#fff"></div>
<div class="t" style="left:928px;top:143px;font-weight:700;letter-spacing:0">IP Catalog</div>
<svg class="a" style="left:1008px;top:148px" width="8" height="8" viewBox="0 0 8 8"><path d="M0.5 0.5 L7.5 7.5 M7.5 0.5 L0.5 7.5" stroke="#707070" stroke-width="1.3"/></svg>
<div class="t" style="left:791px;top:175px;font-weight:700;letter-spacing:0">Cores</div>
<div class="a" style="left:836px;top:176px;width:1px;height:12px;background:#333"></div>
<div class="t" style="left:846px;top:175px;color:#777">Interfaces</div>
<div class="a" style="left:780px;top:199px;width:1234px;height:2px;background:#e8e8e8"></div>
<div class="a" style="left:785px;top:206px;width:24px;height:24px;background:#ececec;border:1px solid #999;box-sizing:border-box"></div>
<svg class="a" style="left:790px;top:211px" width="15" height="15" viewBox="0 0 15 15"><circle cx="6.1" cy="6" r="5.1" fill="none" stroke="#2d4e8b" stroke-width="1.6"/><path d="M10 10 L13 13" stroke="#2d4e8b" stroke-width="2.6" stroke-linecap="round"/></svg>
<svg class="a" style="left:825px;top:211px" width="14" height="15" viewBox="0 0 14 15"><path d="M1.5 0 h11 l-5.5 4.3 z M1.5 14 h11 l-5.5 -4.3 z" fill="#2d4e8b"/><rect x="1" y="6" width="12" height="2" fill="#2d4e8b"/></svg>
<svg class="a" style="left:860px;top:211px" width="14" height="15" viewBox="0 0 14 15"><path d="M1.2 4.6 h10.6 l-5.3 -4.6 z M1.2 9.4 h10.6 l-5.3 4.6 z" fill="#2d4e8b"/><rect x="1" y="6" width="11" height="2" fill="#2d4e8b"/></svg>
<div class="a" style="left:890px;top:206px;width:24px;height:24px;background:#ececec;border:1px solid #999;box-sizing:border-box"></div>
<svg class="a" style="left:895px;top:210px" width="14" height="15" viewBox="0 0 14 15"><rect x="4.5" y="1.5" width="5" height="7" fill="none" stroke="#333" stroke-width="1.2"/><path d="M0 5.5h4.5M9.5 5.5h4.5M7 8.5v6" stroke="#333" stroke-width="1.2"/><path d="M13.5 1 L1 11.5" stroke="#333" stroke-width="1.8"/></svg>
<svg class="a" style="left:930px;top:211px" width="19" height="18" viewBox="0 0 19 18"><rect x="0" y="4" width="4" height="4.5" fill="#2c4f8c"/><rect x="10" y="0" width="4" height="4.5" fill="#2c4f8c"/><rect x="10" y="9" width="4" height="4.5" fill="#2c4f8c"/><path d="M4 6.2 H6.5 V2.2 H10 M6.5 6.2 V11.2 H10" fill="none" stroke="#2c4f8c" stroke-width="1"/><path d="M13 16.5 L18 16.5 L18 11.5 Z" fill="#333"/></svg>
<svg class="a" style="left:965px;top:211px" width="14" height="14" viewBox="0 0 14 14"><path d="M2 12 L7.5 6.5" stroke="#c4c4c4" stroke-width="2.6" stroke-linecap="round"/><path d="M6 7 A4.2 4.2 0 0 1 11 1.2 L8.8 3.6 L10.6 5.4 L13 3.2 A4.2 4.2 0 0 1 7.5 8.2 Z" fill="#c4c4c4"/></svg>
<svg class="a" style="left:1000px;top:211px" width="14" height="14" viewBox="0 0 14 14"><circle cx="9.5" cy="4.5" r="3.8" fill="none" stroke="#c4c4c4" stroke-width="1.3"/><circle cx="10.3" cy="3.6" r="0.9" fill="#c4c4c4"/><path d="M6.8 7.2 L1 13 M2.2 11.8 L3.8 13.3 M3.6 10.4 L5 11.8" stroke="#c4c4c4" stroke-width="1.4"/></svg>
<svg class="a" style="left:1035px;top:211px" width="14" height="14" viewBox="0 0 14 14"><rect x="3" y="3" width="8" height="8" fill="none" stroke="#c4c4c4" stroke-width="1.4"/><rect x="5.5" y="5.5" width="3" height="3" fill="none" stroke="#c4c4c4"/><path d="M5 0v3M9 0v3M5 11v3M9 11v3M0 5h3M0 9h3M11 5h3M11 9h3" stroke="#c4c4c4"/></svg>
<div class="a" style="left:1067px;top:211px;width:14px;height:14px;background:#858585;border:1px solid #777;box-sizing:border-box"></div>
<div class="a" style="left:814px;top:208px;width:1px;height:20px;background:#dcdcdc"></div>
<div class="a" style="left:849px;top:208px;width:1px;height:20px;background:#dcdcdc"></div>
<div class="a" style="left:884px;top:208px;width:1px;height:20px;background:#dcdcdc"></div>
<div class="a" style="left:919px;top:208px;width:1px;height:20px;background:#dcdcdc"></div>
<div class="a" style="left:954px;top:208px;width:1px;height:20px;background:#dcdcdc"></div>
<div class="a" style="left:989px;top:208px;width:1px;height:20px;background:#dcdcdc"></div>
<div class="a" style="left:1024px;top:208px;width:1px;height:20px;background:#dcdcdc"></div>
<div class="a" style="left:1059px;top:208px;width:1px;height:20px;background:#dcdcdc"></div>
<div class="a" style="left:1093px;top:208px;width:1px;height:20px;background:#dcdcdc"></div>
<div class="a" style="left:780px;top:234px;width:1234px;height:2px;background:#e8e8e8"></div>
<div class="t" style="left:786px;top:247px;"><u>S</u>earch:</div>
<div class="a" style="left:835px;top:241px;width:242px;height:26px;background:#fff;border:1px solid #c8c8c8;box-sizing:border-box"></div>
<svg class="a" style="left:840px;top:248px" width="14" height="12" viewBox="0 0 14 12"><circle cx="5" cy="5" r="3.5" fill="none" stroke="#999" stroke-width="1.2"/><path d="M7.5 7.5 L10 10" stroke="#999" stroke-width="1.4"/><path d="M11 4 h3 l-1.5 1.5z" fill="#999"/></svg>
<div class="a" style="left:780px;top:272px;width:1234px;height:24px;background:#ececec"></div>
<div class="a" style="left:780px;top:272px;width:315px;height:24px;background:#cccccc"></div>
<div class="t" style="left:787px;top:277px;">Name</div>
<svg class="a" style="left:1073px;top:277px" width="10" height="6" viewBox="0 0 10 6"><path d="M1 5.5 L5 1.5 L9 5.5" fill="none" stroke="#555" stroke-width="1.5"/></svg>
<div class="t" style="left:1085px;top:275px;font-size:10px">1</div>
<div class="a" style="left:1215px;top:272px;width:1px;height:24px;background:#d4d4d4"></div>
<div class="a" style="left:1306px;top:272px;width:1px;height:24px;background:#d4d4d4"></div>
<div class="a" style="left:1372px;top:272px;width:1px;height:24px;background:#d4d4d4"></div>
<div class="a" style="left:1616px;top:272px;width:1px;height:24px;background:#d4d4d4"></div>
<div class="t" style="left:1103px;top:277px;">AXI4</div>
<div class="t" style="left:1223px;top:277px;">Status</div>
<div class="t" style="left:1314px;top:277px;">License</div>
<div class="t" style="left:1380px;top:277px;">VLNV</div>
<div class="a" style="left:780px;top:320px;width:836px;height:1px;background:#e4e4e4"></div>
<svg class="a" style="left:803px;top:303px" width="6" height="10" viewBox="0 0 6 10"><path d="M1 1 L5 5 L1 9" fill="none" stroke="#666" stroke-width="1.4"/></svg>
<svg class="a" style="left:819px;top:303px" width="12" height="10" viewBox="0 0 12 10"><path d="M0 0.4 H5.8 L6.4 1.5 H10.2 V4.2 H9.2 V3.5 H6 L5.5 2.5 H1 V9 H0 Z" fill="#c8c8c8"/><path d="M3.2 5 H11.8 L10.8 9.7 H2 Z" fill="#c8c8c8"/></svg>
<div class="t" style="left:837px;top:301px;">Dynamic Function eXchange</div>
<div class="a" style="left:780px;top:345px;width:836px;height:1px;background:#e4e4e4"></div>
<svg class="a" style="left:803px;top:328px" width="6" height="10" viewBox="0 0 6 10"><path d="M1 1 L5 5 L1 9" fill="none" stroke="#666" stroke-width="1.4"/></svg>
<svg class="a" style="left:819px;top:328px" width="12" height="10" viewBox="0 0 12 10"><path d="M0 0.4 H5.8 L6.4 1.5 H10.2 V4.2 H9.2 V3.5 H6 L5.5 2.5 H1 V9 H0 Z" fill="#c8c8c8"/><path d="M3.2 5 H11.8 L10.8 9.7 H2 Z" fill="#c8c8c8"/></svg>
<div class="t" style="left:837px;top:326px;">Embedded Processing</div>
<div class="a" style="left:780px;top:370px;width:836px;height:1px;background:#e4e4e4"></div>
<svg class="a" style="left:803px;top:353px" width="6" height="10" viewBox="0 0 6 10"><path d="M1 1 L5 5 L1 9" fill="none" stroke="#666" stroke-width="1.4"/></svg>
<svg class="a" style="left:819px;top:353px" width="12" height="10" viewBox="0 0 12 10"><path d="M0 0.4 H5.8 L6.4 1.5 H10.2 V4.2 H9.2 V3.5 H6 L5.5 2.5 H1 V9 H0 Z" fill="#c8c8c8"/><path d="M3.2 5 H11.8 L10.8 9.7 H2 Z" fill="#c8c8c8"/></svg>
<div class="t" style="left:837px;top:351px;">FPGA Features and Design</div>
<div class="a" style="left:780px;top:395px;width:836px;height:1px;background:#e4e4e4"></div>
<svg class="a" style="left:803px;top:378px" width="6" height="10" viewBox="0 0 6 10"><path d="M1 1 L5 5 L1 9" fill="none" stroke="#666" stroke-width="1.4"/></svg>
<svg class="a" style="left:819px;top:378px" width="12" height="10" viewBox="0 0 12 10"><path d="M0 0.4 H5.8 L6.4 1.5 H10.2 V4.2 H9.2 V3.5 H6 L5.5 2.5 H1 V9 H0 Z" fill="#c8c8c8"/><path d="M3.2 5 H11.8 L10.8 9.7 H2 Z" fill="#c8c8c8"/></svg>
<div class="t" style="left:837px;top:376px;">Kernels</div>
<div class="a" style="left:780px;top:420px;width:836px;height:1px;background:#e4e4e4"></div>
<svg class="a" style="left:801px;top:405px" width="10" height="6" viewBox="0 0 10 6"><path d="M1 1 L5 5 L9 1" fill="none" stroke="#666" stroke-width="1.4"/></svg>
<svg class="a" style="left:819px;top:403px" width="12" height="10" viewBox="0 0 12 10"><path d="M0 0.4 H5.8 L6.4 1.5 H10.2 V4.2 H9.2 V3.5 H6 L5.5 2.5 H1 V9 H0 Z" fill="#c8c8c8"/><path d="M3.2 5 H11.8 L10.8 9.7 H2 Z" fill="#c8c8c8"/></svg>
<div class="t" style="left:837px;top:401px;">Math Functions</div>
<div class="a" style="left:780px;top:445px;width:836px;height:1px;background:#e4e4e4"></div>
<svg class="a" style="left:819px;top:428px" width="6" height="10" viewBox="0 0 6 10"><path d="M1 1 L5 5 L1 9" fill="none" stroke="#666" stroke-width="1.4"/></svg>
<svg class="a" style="left:835px;top:428px" width="12" height="10" viewBox="0 0 12 10"><path d="M0 0.4 H5.8 L6.4 1.5 H10.2 V4.2 H9.2 V3.5 H6 L5.5 2.5 H1 V9 H0 Z" fill="#c8c8c8"/><path d="M3.2 5 H11.8 L10.8 9.7 H2 Z" fill="#c8c8c8"/></svg>
<div class="t" style="left:853px;top:426px;">Adders &amp; Subtracters</div>
<div class="a" style="left:780px;top:470px;width:836px;height:1px;background:#e4e4e4"></div>
<svg class="a" style="left:819px;top:453px" width="6" height="10" viewBox="0 0 6 10"><path d="M1 1 L5 5 L1 9" fill="none" stroke="#666" stroke-width="1.4"/></svg>
<svg class="a" style="left:835px;top:453px" width="12" height="10" viewBox="0 0 12 10"><path d="M0 0.4 H5.8 L6.4 1.5 H10.2 V4.2 H9.2 V3.5 H6 L5.5 2.5 H1 V9 H0 Z" fill="#c8c8c8"/><path d="M3.2 5 H11.8 L10.8 9.7 H2 Z" fill="#c8c8c8"/></svg>
<div class="t" style="left:853px;top:451px;">Conversions</div>
<div class="a" style="left:780px;top:495px;width:836px;height:1px;background:#e4e4e4"></div>
<svg class="a" style="left:819px;top:478px" width="6" height="10" viewBox="0 0 6 10"><path d="M1 1 L5 5 L1 9" fill="none" stroke="#666" stroke-width="1.4"/></svg>
<svg class="a" style="left:835px;top:478px" width="12" height="10" viewBox="0 0 12 10"><path d="M0 0.4 H5.8 L6.4 1.5 H10.2 V4.2 H9.2 V3.5 H6 L5.5 2.5 H1 V9 H0 Z" fill="#c8c8c8"/><path d="M3.2 5 H11.8 L10.8 9.7 H2 Z" fill="#c8c8c8"/></svg>
<div class="t" style="left:853px;top:476px;">CORDIC</div>
<div class="a" style="left:780px;top:520px;width:836px;height:1px;background:#e4e4e4"></div>
<svg class="a" style="left:817px;top:505px" width="10" height="6" viewBox="0 0 10 6"><path d="M1 1 L5 5 L9 1" fill="none" stroke="#666" stroke-width="1.4"/></svg>
<svg class="a" style="left:835px;top:503px" width="12" height="10" viewBox="0 0 12 10"><path d="M0 0.4 H5.8 L6.4 1.5 H10.2 V4.2 H9.2 V3.5 H6 L5.5 2.5 H1 V9 H0 Z" fill="#c8c8c8"/><path d="M3.2 5 H11.8 L10.8 9.7 H2 Z" fill="#c8c8c8"/></svg>
<div class="t" style="left:853px;top:501px;">Dividers</div>
<div class="a" style="left:780px;top:545px;width:836px;height:1px;background:#e4e4e4"></div>
<svg class="a" style="left:851px;top:527px" width="12" height="12" viewBox="0 0 12 12"><rect x="3.5" y="0.5" width="5" height="7" fill="#f7a531" stroke="#9a9a9a"/><path d="M0 2.5h3.5M0 5.5h3.5M8.5 2.5h3.5M8.5 5.5h3.5M6 7.5v4.5" stroke="#9a9a9a"/></svg>
<div class="t" style="left:869px;top:526px;">Divider Generator</div>
<div class="a" style="left:1095px;top:521px;width:1px;height:25px;background:#e4e4e4"></div>
<div class="a" style="left:1215px;top:521px;width:1px;height:25px;background:#e4e4e4"></div>
<div class="a" style="left:1306px;top:521px;width:1px;height:25px;background:#e4e4e4"></div>
<div class="a" style="left:1372px;top:521px;width:1px;height:25px;background:#e4e4e4"></div>
<div class="t" style="left:1103px;top:526px;">AXI4-Stream</div>
<div class="t" style="left:1223px;top:526px;">Production</div>
<div class="t" style="left:1314px;top:526px;">Included</div>
<div class="t" style="left:1380px;top:526px;">xilinx.com:ip:div_gen:5.1</div>
<div class="a" style="left:780px;top:570px;width:836px;height:1px;background:#e4e4e4"></div>
<svg class="a" style="left:819px;top:553px" width="6" height="10" viewBox="0 0 6 10"><path d="M1 1 L5 5 L1 9" fill="none" stroke="#666" stroke-width="1.4"/></svg>
<svg class="a" style="left:835px;top:553px" width="12" height="10" viewBox="0 0 12 10"><path d="M0 0.4 H5.8 L6.4 1.5 H10.2 V4.2 H9.2 V3.5 H6 L5.5 2.5 H1 V9 H0 Z" fill="#c8c8c8"/><path d="M3.2 5 H11.8 L10.8 9.7 H2 Z" fill="#c8c8c8"/></svg>
<div class="t" style="left:853px;top:551px;">Floating Point</div>
<div class="a" style="left:780px;top:595px;width:836px;height:1px;background:#e4e4e4"></div>
<svg class="a" style="left:817px;top:580px" width="10" height="6" viewBox="0 0 10 6"><path d="M1 1 L5 5 L9 1" fill="none" stroke="#666" stroke-width="1.4"/></svg>
<svg class="a" style="left:835px;top:578px" width="12" height="10" viewBox="0 0 12 10"><path d="M0 0.4 H5.8 L6.4 1.5 H10.2 V4.2 H9.2 V3.5 H6 L5.5 2.5 H1 V9 H0 Z" fill="#c8c8c8"/><path d="M3.2 5 H11.8 L10.8 9.7 H2 Z" fill="#c8c8c8"/></svg>
<div class="t" style="left:853px;top:576px;">Multipliers</div>
<div class="a" style="left:780px;top:620px;width:836px;height:1px;background:#e4e4e4"></div>
<svg class="a" style="left:851px;top:602px" width="12" height="12" viewBox="0 0 12 12"><rect x="3.5" y="0.5" width="5" height="7" fill="#f7a531" stroke="#9a9a9a"/><path d="M0 2.5h3.5M0 5.5h3.5M8.5 2.5h3.5M8.5 5.5h3.5M6 7.5v4.5" stroke="#9a9a9a"/></svg>
<div class="t" style="left:869px;top:601px;">Complex Multiplier</div>
<div class="a" style="left:1095px;top:596px;width:1px;height:25px;background:#e4e4e4"></div>
<div class="a" style="left:1215px;top:596px;width:1px;height:25px;background:#e4e4e4"></div>
<div class="a" style="left:1306px;top:596px;width:1px;height:25px;background:#e4e4e4"></div>
<div class="a" style="left:1372px;top:596px;width:1px;height:25px;background:#e4e4e4"></div>
<div class="t" style="left:1103px;top:601px;">AXI4-Stream</div>
<div class="t" style="left:1223px;top:601px;">Production</div>
<div class="t" style="left:1314px;top:601px;">Included</div>
<div class="t" style="left:1380px;top:601px;">xilinx.com:ip:cmpy:6.0</div>
<div class="a" style="left:780px;top:645px;width:836px;height:1px;background:#e4e4e4"></div>
<svg class="a" style="left:851px;top:627px" width="12" height="12" viewBox="0 0 12 12"><rect x="3.5" y="0.5" width="5" height="7" fill="#f7a531" stroke="#9a9a9a"/><path d="M0 2.5h3.5M0 5.5h3.5M8.5 2.5h3.5M8.5 5.5h3.5M6 7.5v4.5" stroke="#9a9a9a"/></svg>
<div class="t" style="left:869px;top:626px;">Multiplier</div>
<div class="a" style="left:1095px;top:621px;width:1px;height:25px;background:#e4e4e4"></div>
<div class="a" style="left:1215px;top:621px;width:1px;height:25px;background:#e4e4e4"></div>
<div class="a" style="left:1306px;top:621px;width:1px;height:25px;background:#e4e4e4"></div>
<div class="a" style="left:1372px;top:621px;width:1px;height:25px;background:#e4e4e4"></div>
<div class="t" style="left:1103px;top:626px;"></div>
<div class="t" style="left:1223px;top:626px;">Production</div>
<div class="t" style="left:1314px;top:626px;">Included</div>
<div class="t" style="left:1380px;top:626px;">xilinx.com:ip:mult_gen:12.0</div>
<div class="a" style="left:780px;top:670px;width:836px;height:1px;background:#e4e4e4"></div>
<svg class="a" style="left:819px;top:653px" width="6" height="10" viewBox="0 0 6 10"><path d="M1 1 L5 5 L1 9" fill="none" stroke="#666" stroke-width="1.4"/></svg>
<svg class="a" style="left:835px;top:653px" width="12" height="10" viewBox="0 0 12 10"><path d="M0 0.4 H5.8 L6.4 1.5 H10.2 V4.2 H9.2 V3.5 H6 L5.5 2.5 H1 V9 H0 Z" fill="#c8c8c8"/><path d="M3.2 5 H11.8 L10.8 9.7 H2 Z" fill="#c8c8c8"/></svg>
<div class="t" style="left:853px;top:651px;">Square Root</div>
<div class="a" style="left:780px;top:695px;width:836px;height:1px;background:#e4e4e4"></div>
<svg class="a" style="left:819px;top:678px" width="6" height="10" viewBox="0 0 6 10"><path d="M1 1 L5 5 L1 9" fill="none" stroke="#666" stroke-width="1.4"/></svg>
<svg class="a" style="left:835px;top:678px" width="12" height="10" viewBox="0 0 12 10"><path d="M0 0.4 H5.8 L6.4 1.5 H10.2 V4.2 H9.2 V3.5 H6 L5.5 2.5 H1 V9 H0 Z" fill="#c8c8c8"/><path d="M3.2 5 H11.8 L10.8 9.7 H2 Z" fill="#c8c8c8"/></svg>
<div class="t" style="left:853px;top:676px;">Trig Functions</div>
<div class="a" style="left:780px;top:720px;width:836px;height:1px;background:#e4e4e4"></div>
<svg class="a" style="left:803px;top:703px" width="6" height="10" viewBox="0 0 6 10"><path d="M1 1 L5 5 L1 9" fill="none" stroke="#666" stroke-width="1.4"/></svg>
<svg class="a" style="left:819px;top:703px" width="12" height="10" viewBox="0 0 12 10"><path d="M0 0.4 H5.8 L6.4 1.5 H10.2 V4.2 H9.2 V3.5 H6 L5.5 2.5 H1 V9 H0 Z" fill="#c8c8c8"/><path d="M3.2 5 H11.8 L10.8 9.7 H2 Z" fill="#c8c8c8"/></svg>
<div class="t" style="left:837px;top:701px;">Memories &amp; Storage Elements</div>
<svg class="a" style="left:803px;top:728px" width="6" height="10" viewBox="0 0 6 10"><path d="M1 1 L5 5 L1 9" fill="none" stroke="#666" stroke-width="1.4"/></svg>
<svg class="a" style="left:819px;top:728px" width="12" height="10" viewBox="0 0 12 10"><path d="M0 0.4 H5.8 L6.4 1.5 H10.2 V4.2 H9.2 V3.5 H6 L5.5 2.5 H1 V9 H0 Z" fill="#c8c8c8"/><path d="M3.2 5 H11.8 L10.8 9.7 H2 Z" fill="#c8c8c8"/></svg>
<div class="t" style="left:837px;top:726px;">Partial Reconfiguration</div>
<div class="a" style="left:1616px;top:296px;width:1px;height:449px;background:#e4e4e4"></div>
<div class="a" style="left:780px;top:754px;width:1234px;height:32px;background:#ececec"></div>
<div class="t" style="left:795px;top:763px;font-weight:700;letter-spacing:0">Details</div>
<div class="t" style="left:1292px;top:888px;color:#777;letter-spacing:0">Select an IP or Interface or Repository to see details</div>
<div class="a" style="left:255px;top:1017px;width:1759px;height:251px;background:#fff;border:3px solid #d6d6d6;border-right:none;border-top-width:1px;box-sizing:border-box"></div>
<div class="a" style="left:258px;top:1018px;width:1756px;height:32px;background:#eeeeee"></div>
<div class="t" style="left:264px;top:1027px;color:#8a8a8a;font-weight:700;letter-spacing:0">Tcl Console</div>
<div class="t" style="left:353px;top:1027px;color:#8a8a8a;font-weight:700;letter-spacing:0">Messages</div>
<div class="t" style="left:434px;top:1027px;color:#8a8a8a;font-weight:700;letter-spacing:0">Log</div>
<div class="t" style="left:477px;top:1027px;color:#8a8a8a;font-weight:700;letter-spacing:0">Reports</div>
<div class="a" style="left:346px;top:1020px;width:1px;height:26px;background:#c4c4c4"></div>
<div class="a" style="left:427px;top:1020px;width:1px;height:26px;background:#c4c4c4"></div>
<div class="a" style="left:470px;top:1020px;width:1px;height:26px;background:#c4c4c4"></div>
<div class="a" style="left:538px;top:1020px;width:1px;height:26px;background:#c4c4c4"></div>
<div class="a" style="left:539px;top:1020px;width:115px;height:30px;background:#fff"></div>
<div class="t" style="left:545px;top:1027px;font-weight:700;letter-spacing:0">Design Runs</div>
<svg class="a" style="left:640px;top:1032px" width="8" height="8" viewBox="0 0 8 8"><path d="M0.5 0.5 L7.5 7.5 M7.5 0.5 L0.5 7.5" stroke="#707070" stroke-width="1.3"/></svg>
<svg class="a" style="left:2007px;top:1031px" width="9" height="10" viewBox="0 0 9 10"><path d="M1.2 3.3 C1.2 1.4 2.6 0.8 4.5 0.8 C6.5 0.8 7.8 1.8 7.8 3.2 C7.8 5 5.2 5.2 5.2 6.9" fill="none" stroke="#8c8c8c" stroke-width="1.9"/><rect x="4" y="8.2" width="2.4" height="1.8" fill="#8c8c8c"/></svg>
<svg class="a" style="left:268px;top:1059px" width="15" height="15" viewBox="0 0 15 15"><circle cx="6.1" cy="6" r="5.1" fill="none" stroke="#2d4e8b" stroke-width="1.6"/><path d="M10 10 L13 13" stroke="#2d4e8b" stroke-width="2.6" stroke-linecap="round"/></svg>
<svg class="a" style="left:303px;top:1059px" width="14" height="15" viewBox="0 0 14 15"><path d="M1.5 0 h11 l-5.5 4.3 z M1.5 14 h11 l-5.5 -4.3 z" fill="#2d4e8b"/><rect x="1" y="6" width="12" height="2" fill="#2d4e8b"/></svg>
<svg class="a" style="left:338px;top:1059px" width="14" height="15" viewBox="0 0 14 15"><path d="M1.2 4.6 h10.6 l-5.3 -4.6 z M1.2 9.4 h10.6 l-5.3 4.6 z" fill="#2d4e8b"/><rect x="1" y="6" width="11" height="2" fill="#2d4e8b"/></svg>
<svg class="a" style="left:373px;top:1059px" width="14" height="14" viewBox="0 0 14 14"><rect x="1" y="1" width="2.5" height="12" fill="#bdbdbd"/><path d="M13 1 L5 7 L13 13 Z" fill="#bdbdbd"/></svg>
<svg class="a" style="left:408px;top:1059px" width="14" height="14" viewBox="0 0 14 14"><path d="M7 2 L2 7 L7 12 M12 2 L7 7 L12 12" fill="none" stroke="#bdbdbd" stroke-width="2"/></svg>
<svg class="a" style="left:443px;top:1059px" width="14" height="14" viewBox="0 0 14 14"><path d="M2 1 L12 7 L2 13 Z" fill="#bdbdbd"/></svg>
<svg class="a" style="left:478px;top:1059px" width="14" height="14" viewBox="0 0 14 14"><path d="M2 2 L7 7 L2 12 M7 2 L12 7 L7 12" fill="none" stroke="#bdbdbd" stroke-width="2"/></svg>
<svg class="a" style="left:513px;top:1059px" width="14" height="14" viewBox="0 0 14 14"><rect x="0" y="6" width="14" height="2.4" fill="#2d4e8b"/><rect x="5.8" y="0" width="2.4" height="14" fill="#2d4e8b"/></svg>
<svg class="a" style="left:548px;top:1059px" width="14" height="14" viewBox="0 0 14 14"><circle cx="3.3" cy="3.3" r="2.4" fill="none" stroke="#2d4e8b" stroke-width="1.6"/><circle cx="10.7" cy="10.7" r="2.4" fill="none" stroke="#2d4e8b" stroke-width="1.6"/><path d="M12.5 1.5 L1.5 12.5" stroke="#2d4e8b" stroke-width="1.5"/></svg>
<div class="a" style="left:292px;top:1056px;width:1px;height:20px;background:#dcdcdc"></div>
<div class="a" style="left:327px;top:1056px;width:1px;height:20px;background:#dcdcdc"></div>
<div class="a" style="left:362px;top:1056px;width:1px;height:20px;background:#dcdcdc"></div>
<div class="a" style="left:397px;top:1056px;width:1px;height:20px;background:#dcdcdc"></div>
<div class="a" style="left:432px;top:1056px;width:1px;height:20px;background:#dcdcdc"></div>
<div class="a" style="left:467px;top:1056px;width:1px;height:20px;background:#dcdcdc"></div>
<div class="a" style="left:502px;top:1056px;width:1px;height:20px;background:#dcdcdc"></div>
<div class="a" style="left:537px;top:1056px;width:1px;height:20px;background:#dcdcdc"></div>
<div class="a" style="left:572px;top:1056px;width:1px;height:20px;background:#dcdcdc"></div>
<div class="a" style="left:258px;top:1082px;width:1756px;height:26px;background:#ececec"></div>
<div class="a" style="left:439px;top:1082px;width:1px;height:26px;background:#d4d4d4"></div>
<div class="a" style="left:520px;top:1082px;width:1px;height:26px;background:#d4d4d4"></div>
<div class="a" style="left:680px;top:1082px;width:1px;height:26px;background:#d4d4d4"></div>
<div class="a" style="left:726px;top:1082px;width:1px;height:26px;background:#d4d4d4"></div>
<div class="a" style="left:768px;top:1082px;width:1px;height:26px;background:#d4d4d4"></div>
<div class="a" style="left:814px;top:1082px;width:1px;height:26px;background:#d4d4d4"></div>
<div class="a" style="left:856px;top:1082px;width:1px;height:26px;background:#d4d4d4"></div>
<div class="a" style="left:908px;top:1082px;width:1px;height:26px;background:#d4d4d4"></div>
<div class="a" style="left:991px;top:1082px;width:1px;height:26px;background:#d4d4d4"></div>
<div class="a" style="left:1085px;top:1082px;width:1px;height:26px;background:#d4d4d4"></div>
<div class="a" style="left:1126px;top:1082px;width:1px;height:26px;background:#d4d4d4"></div>
<div class="a" style="left:1158px;top:1082px;width:1px;height:26px;background:#d4d4d4"></div>
<div class="a" style="left:1211px;top:1082px;width:1px;height:26px;background:#d4d4d4"></div>
<div class="a" style="left:1265px;top:1082px;width:1px;height:26px;background:#d4d4d4"></div>
<div class="a" style="left:1308px;top:1082px;width:1px;height:26px;background:#d4d4d4"></div>
<div class="a" style="left:1351px;top:1082px;width:1px;height:26px;background:#d4d4d4"></div>
<div class="a" style="left:1415px;top:1082px;width:1px;height:26px;background:#d4d4d4"></div>
<div class="a" style="left:1774px;top:1082px;width:1px;height:26px;background:#d4d4d4"></div>
<div class="t" style="left:265px;top:1089px;">Name</div>
<div class="t" style="left:447px;top:1089px;">Constraints</div>
<div class="t" style="left:528px;top:1089px;">Status</div>
<div class="t" style="left:688px;top:1089px;">WNS</div>
<div class="t" style="left:734px;top:1089px;">TNS</div>
<div class="t" style="left:776px;top:1089px;">WHS</div>
<div class="t" style="left:822px;top:1089px;">THS</div>
<div class="t" style="left:864px;top:1089px;">TPWS</div>
<div class="t" style="left:916px;top:1089px;">Total Power</div>
<div class="t" style="left:999px;top:1089px;">Failed Routes</div>
<div class="t" style="left:1093px;top:1089px;">LUT</div>
<div class="t" style="left:1134px;top:1089px;">FF</div>
<div class="t" style="left:1166px;top:1089px;">BRAM</div>
<div class="t" style="left:1219px;top:1089px;">URAM</div>
<div class="t" style="left:1273px;top:1089px;">DSP</div>
<div class="t" style="left:1316px;top:1089px;">Start</div>
<div class="t" style="left:1359px;top:1089px;">Elapsed</div>
<div class="t" style="left:1423px;top:1089px;">Run Strategy</div>
<div class="t" style="left:1782px;top:1089px;">Report Strategy</div>
<div class="a" style="left:258px;top:1132px;width:1756px;height:1px;background:#e4e4e4"></div>
<div class="a" style="left:439px;top:1108px;width:1px;height:25px;background:#e4e4e4"></div>
<div class="a" style="left:520px;top:1108px;width:1px;height:25px;background:#e4e4e4"></div>
<div class="a" style="left:680px;top:1108px;width:1px;height:25px;background:#e4e4e4"></div>
<div class="a" style="left:726px;top:1108px;width:1px;height:25px;background:#e4e4e4"></div>
<div class="a" style="left:768px;top:1108px;width:1px;height:25px;background:#e4e4e4"></div>
<div class="a" style="left:814px;top:1108px;width:1px;height:25px;background:#e4e4e4"></div>
<div class="a" style="left:856px;top:1108px;width:1px;height:25px;background:#e4e4e4"></div>
<div class="a" style="left:908px;top:1108px;width:1px;height:25px;background:#e4e4e4"></div>
<div class="a" style="left:991px;top:1108px;width:1px;height:25px;background:#e4e4e4"></div>
<div class="a" style="left:1085px;top:1108px;width:1px;height:25px;background:#e4e4e4"></div>
<div class="a" style="left:1126px;top:1108px;width:1px;height:25px;background:#e4e4e4"></div>
<div class="a" style="left:1158px;top:1108px;width:1px;height:25px;background:#e4e4e4"></div>
<div class="a" style="left:1211px;top:1108px;width:1px;height:25px;background:#e4e4e4"></div>
<div class="a" style="left:1265px;top:1108px;width:1px;height:25px;background:#e4e4e4"></div>
<div class="a" style="left:1308px;top:1108px;width:1px;height:25px;background:#e4e4e4"></div>
<div class="a" style="left:1351px;top:1108px;width:1px;height:25px;background:#e4e4e4"></div>
<div class="a" style="left:1415px;top:1108px;width:1px;height:25px;background:#e4e4e4"></div>
<div class="a" style="left:1774px;top:1108px;width:1px;height:25px;background:#e4e4e4"></div>
<div class="a" style="left:258px;top:1157px;width:1756px;height:1px;background:#e4e4e4"></div>
<div class="a" style="left:439px;top:1133px;width:1px;height:25px;background:#e4e4e4"></div>
<div class="a" style="left:520px;top:1133px;width:1px;height:25px;background:#e4e4e4"></div>
<div class="a" style="left:680px;top:1133px;width:1px;height:25px;background:#e4e4e4"></div>
<div class="a" style="left:726px;top:1133px;width:1px;height:25px;background:#e4e4e4"></div>
<div class="a" style="left:768px;top:1133px;width:1px;height:25px;background:#e4e4e4"></div>
<div class="a" style="left:814px;top:1133px;width:1px;height:25px;background:#e4e4e4"></div>
<div class="a" style="left:856px;top:1133px;width:1px;height:25px;background:#e4e4e4"></div>
<div class="a" style="left:908px;top:1133px;width:1px;height:25px;background:#e4e4e4"></div>
<div class="a" style="left:991px;top:1133px;width:1px;height:25px;background:#e4e4e4"></div>
<div class="a" style="left:1085px;top:1133px;width:1px;height:25px;background:#e4e4e4"></div>
<div class="a" style="left:1126px;top:1133px;width:1px;height:25px;background:#e4e4e4"></div>
<div class="a" style="left:1158px;top:1133px;width:1px;height:25px;background:#e4e4e4"></div>
<div class="a" style="left:1211px;top:1133px;width:1px;height:25px;background:#e4e4e4"></div>
<div class="a" style="left:1265px;top:1133px;width:1px;height:25px;background:#e4e4e4"></div>
<div class="a" style="left:1308px;top:1133px;width:1px;height:25px;background:#e4e4e4"></div>
<div class="a" style="left:1351px;top:1133px;width:1px;height:25px;background:#e4e4e4"></div>
<div class="a" style="left:1415px;top:1133px;width:1px;height:25px;background:#e4e4e4"></div>
<div class="a" style="left:1774px;top:1133px;width:1px;height:25px;background:#e4e4e4"></div>
<div class="a" style="left:258px;top:1182px;width:1756px;height:1px;background:#e4e4e4"></div>
<div class="a" style="left:258px;top:1207px;width:1756px;height:1px;background:#e4e4e4"></div>
<div class="a" style="left:439px;top:1183px;width:1px;height:25px;background:#e4e4e4"></div>
<div class="a" style="left:520px;top:1183px;width:1px;height:25px;background:#e4e4e4"></div>
<div class="a" style="left:680px;top:1183px;width:1px;height:25px;background:#e4e4e4"></div>
<div class="a" style="left:726px;top:1183px;width:1px;height:25px;background:#e4e4e4"></div>
<div class="a" style="left:768px;top:1183px;width:1px;height:25px;background:#e4e4e4"></div>
<div class="a" style="left:814px;top:1183px;width:1px;height:25px;background:#e4e4e4"></div>
<div class="a" style="left:856px;top:1183px;width:1px;height:25px;background:#e4e4e4"></div>
<div class="a" style="left:908px;top:1183px;width:1px;height:25px;background:#e4e4e4"></div>
<div class="a" style="left:991px;top:1183px;width:1px;height:25px;background:#e4e4e4"></div>
<div class="a" style="left:1085px;top:1183px;width:1px;height:25px;background:#e4e4e4"></div>
<div class="a" style="left:1126px;top:1183px;width:1px;height:25px;background:#e4e4e4"></div>
<div class="a" style="left:1158px;top:1183px;width:1px;height:25px;background:#e4e4e4"></div>
<div class="a" style="left:1211px;top:1183px;width:1px;height:25px;background:#e4e4e4"></div>
<div class="a" style="left:1265px;top:1183px;width:1px;height:25px;background:#e4e4e4"></div>
<div class="a" style="left:1308px;top:1183px;width:1px;height:25px;background:#e4e4e4"></div>
<div class="a" style="left:1351px;top:1183px;width:1px;height:25px;background:#e4e4e4"></div>
<div class="a" style="left:1415px;top:1183px;width:1px;height:25px;background:#e4e4e4"></div>
<div class="a" style="left:1774px;top:1183px;width:1px;height:25px;background:#e4e4e4"></div>
<div class="a" style="left:258px;top:1232px;width:1756px;height:1px;background:#e4e4e4"></div>
<div class="a" style="left:439px;top:1208px;width:1px;height:25px;background:#e4e4e4"></div>
<div class="a" style="left:520px;top:1208px;width:1px;height:25px;background:#e4e4e4"></div>
<div class="a" style="left:680px;top:1208px;width:1px;height:25px;background:#e4e4e4"></div>
<div class="a" style="left:726px;top:1208px;width:1px;height:25px;background:#e4e4e4"></div>
<div class="a" style="left:768px;top:1208px;width:1px;height:25px;background:#e4e4e4"></div>
<div class="a" style="left:814px;top:1208px;width:1px;height:25px;background:#e4e4e4"></div>
<div class="a" style="left:856px;top:1208px;width:1px;height:25px;background:#e4e4e4"></div>
<div class="a" style="left:908px;top:1208px;width:1px;height:25px;background:#e4e4e4"></div>
<div class="a" style="left:991px;top:1208px;width:1px;height:25px;background:#e4e4e4"></div>
<div class="a" style="left:1085px;top:1208px;width:1px;height:25px;background:#e4e4e4"></div>
<div class="a" style="left:1126px;top:1208px;width:1px;height:25px;background:#e4e4e4"></div>
<div class="a" style="left:1158px;top:1208px;width:1px;height:25px;background:#e4e4e4"></div>
<div class="a" style="left:1211px;top:1208px;width:1px;height:25px;background:#e4e4e4"></div>
<div class="a" style="left:1265px;top:1208px;width:1px;height:25px;background:#e4e4e4"></div>
<div class="a" style="left:1308px;top:1208px;width:1px;height:25px;background:#e4e4e4"></div>
<div class="a" style="left:1351px;top:1208px;width:1px;height:25px;background:#e4e4e4"></div>
<div class="a" style="left:1415px;top:1208px;width:1px;height:25px;background:#e4e4e4"></div>
<div class="a" style="left:1774px;top:1208px;width:1px;height:25px;background:#e4e4e4"></div>
<svg class="a" style="left:263px;top:1117px" width="10" height="6" viewBox="0 0 10 6"><path d="M1 1 L5 5 L9 1" fill="none" stroke="#666" stroke-width="1.4"/></svg>
<svg class="a" style="left:282px;top:1114px" width="10" height="12" viewBox="0 0 10 12"><path d="M1 1 L9 6 L1 11 Z" fill="none" stroke="#a0a0a0" stroke-width="1.2"/></svg>
<div class="t" style="left:299px;top:1113px;"><b>synth_1</b> <span class="g">(active)</span></div>
<div class="t" style="left:447px;top:1113px;font-weight:700;letter-spacing:0">constrs_1</div>
<div class="t" style="left:528px;top:1113px;font-weight:700;letter-spacing:0">Not started</div>
<div class="t" style="left:1423px;top:1113px;font-weight:700;letter-spacing:0">Vivado Synthesis Defaults (Vivado Synthesis 2020)</div>
<div class="t" style="left:1782px;top:1113px;font-weight:700">Vivado Synthesis Default Reports (Vivado Synthesis 2020)</div>
<svg class="a" style="left:298px;top:1139px" width="10" height="12" viewBox="0 0 10 12"><path d="M1 1 L9 6 L1 11 Z" fill="none" stroke="#a0a0a0" stroke-width="1.2"/></svg>
<div class="t" style="left:315px;top:1138px;">impl_1</div>
<div class="t" style="left:447px;top:1138px;">constrs_1</div>
<div class="t" style="left:528px;top:1138px;">Not started</div>
<div class="t" style="left:1423px;top:1138px;">Vivado Implementation Defaults (Vivado Implementation 2020)</div>
<div class="t" style="left:1782px;top:1138px;">Vivado Implementation Default Reports (Vivado Implementation 2020)</div>
<svg class="a" style="left:263px;top:1167px" width="10" height="6" viewBox="0 0 10 6"><path d="M1 1 L5 5 L9 1" fill="none" stroke="#666" stroke-width="1.4"/></svg>
<svg class="a" style="left:281px;top:1165px" width="12" height="10" viewBox="0 0 12 10"><path d="M0 0.4 H5.8 L6.4 1.5 H10.2 V4.2 H9.2 V3.5 H6 L5.5 2.5 H1 V9 H0 Z" fill="#c8c8c8"/><path d="M3.2 5 H11.8 L10.8 9.7 H2 Z" fill="#c8c8c8"/></svg>
<div class="t" style="left:299px;top:1163px;">Out-of-Context Module Runs</div>
<svg class="a" style="left:297px;top:1189px" width="12" height="10" viewBox="0 0 12 10"><path d="M1 5 L4.5 8.5 L11 1.5" fill="none" stroke="#3bb030" stroke-width="2.4"/></svg>
<div class="t" style="left:315px;top:1188px;">mult_gen_0_synth_1</div>
<div class="t" style="left:447px;top:1188px;">mult_gen_0</div>
<div class="t" style="left:528px;top:1188px;">synth_design Complete!</div>
<div class="t" style="left:1058px;width:60px;text-align:right;top:1188px">280</div>
<div class="t" style="left:1091px;width:60px;text-align:right;top:1188px">32</div>
<div class="t" style="left:1143px;width:60px;text-align:right;top:1188px">0.0</div>
<div class="t" style="left:1197px;width:60px;text-align:right;top:1188px">0</div>
<div class="t" style="left:1241px;width:60px;text-align:right;top:1188px">0</div>
<div class="t" style="left:1316px;top:1188px;width:34px;overflow:hidden">10/31/2</div>
<div class="t" style="left:1360px;top:1188px;">00:00:20</div>
<div class="t" style="left:1423px;top:1188px;">Vivado Synthesis Defaults (Vivado Synthesis 2020)</div>
<div class="t" style="left:1782px;top:1188px;">Vivado Synthesis Default Reports (Vivado Synthesis 2020)</div>
<svg class="a" style="left:297px;top:1214px" width="12" height="10" viewBox="0 0 12 10"><path d="M1 5 L4.5 8.5 L11 1.5" fill="none" stroke="#3bb030" stroke-width="2.4"/></svg>
<div class="t" style="left:315px;top:1213px;">div_gen_0</div>
<div class="t" style="left:528px;top:1213px;">Using cached IP results</div>
<div class="a" style="left:258px;top:1249px;width:1756px;height:1px;background:#e8e8e8"></div>
<div class="a" style="left:258px;top:1250px;width:1756px;height:14px;background:#f4f4f4"></div>
<svg class="a" style="left:262px;top:1252px" width="7" height="10" viewBox="0 0 7 10"><path d="M6 1 L2 5 L6 9" fill="none" stroke="#666" stroke-width="2"/></svg>
<div class="a" style="left:275px;top:1252px;width:1452px;height:9px;background:#c4c4c4;border-radius:4px"></div>
<div class="a" style="left:1px;top:1268px;width:2013px;height:23px;background:#efefef;border-bottom-left-radius:8px"></div>
<div class="a" style="left:273.5px;top:241.5px;width:171.5px;height:32.5px;border:2.6px solid #ff0000;box-sizing:border-box"></div>
<div class="a" style="left:301.8px;top:271.3px;width:186.7px;height:28.5px;border:2.6px solid #ff0000;box-sizing:border-box"></div>
<div class="a" style="left:338.5px;top:312.4px;width:128.0px;height:36.200000000000045px;border:2.6px solid #ff0000;box-sizing:border-box"></div>
<div class="a" style="left:335.5px;top:552.4px;width:85.0px;height:35.10000000000002px;border:2.6px solid #ff0000;box-sizing:border-box"></div>
<svg class="a" style="left:0;top:0" width="2014" height="1292"><path d="M334.74 554.35 L284.14 288.46 L288.51 288.60 L277.50 274.50 L272.82 291.77 L276.79 289.95 L333.26 554.65 Z" fill="#ff0000"/><path d="M335.63 287.34 L353.32 310.69 L349.72 312.69 L366.80 320.00 L360.68 302.45 L358.44 305.92 L336.37 286.66 Z" fill="#ff0000"/><path d="M363.94 673.79 L375.06 605.31 L379.41 606.85 L373.40 590.00 L363.52 604.91 L368.11 604.47 L362.46 673.61 Z" fill="#ff0000"/></svg>
</body></html>
